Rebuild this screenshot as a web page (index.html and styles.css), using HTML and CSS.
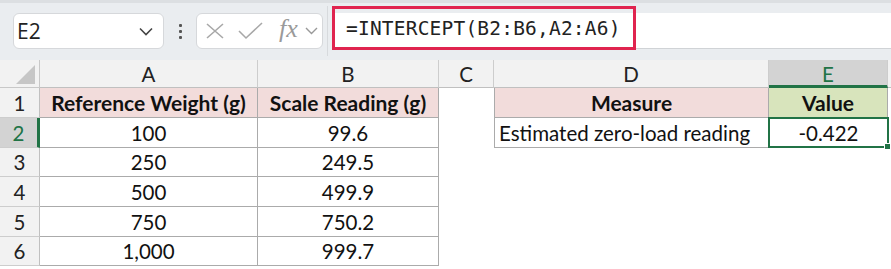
FILE: index.html
```html
<!DOCTYPE html>
<html lang="en">
<head>
  <meta charset="UTF-8" />
  <title>INTERCEPT</title>
  <link rel="stylesheet" href="styles.css">
</head>
<body>
  <div class="toolbar">
    <div class="name-box">
      <span>E2</span>
      <svg class="chev" width="14" height="9" viewBox="0 0 14 9"><path d="M1 1.5 L7 7.5 L13 1.5" fill="none" stroke="#444" stroke-width="1.6"/></svg>
    </div>
    <div class="dots"><i></i><i></i><i></i></div>
    <div class="fx-box">
      <svg width="18" height="16" viewBox="0 0 18 16"><path d="M1 1 L17 15 M17 1 L1 15" stroke="#a8a8a8" stroke-width="1.6" fill="none"/></svg>
      <svg width="25" height="18" viewBox="0 0 25 18"><path d="M1 9 L8 16 L24 1" stroke="#a8a8a8" stroke-width="1.6" fill="none"/></svg>
      <span class="fx">fx</span>
      <svg width="13" height="8" viewBox="0 0 13 8"><path d="M1 1 L6.5 6.5 L12 1" fill="none" stroke="#999" stroke-width="1.4"/></svg>
    </div>
    <div class="sep"></div>
    <div class="formula">
      <div class="formula-text">=INTERCEPT(B2:B6,A2:A6)</div>
    </div>
  </div>

  <div class="sheet">
    <div class="corner"><span></span></div>
    <div class="col-head">A</div>
    <div class="col-head">B</div>
    <div class="col-head">C</div>
    <div class="col-head">D</div>
    <div class="col-head sel">E</div>
    <div class="col-edge"></div>

    <div class="row-head">1</div>
    <div class="cell th">Reference Weight (g)</div>
    <div class="cell th">Scale Reading (g)</div>
    <div class="blank"></div>
    <div class="cell th lead">Measure</div>
    <div class="cell th green">Value</div>
    <div class="blank"></div>

    <div class="row-head sel">2</div>
    <div class="cell">100</div>
    <div class="cell">99.6</div>
    <div class="blank"></div>
    <div class="cell lead left">Estimated zero-load reading</div>
    <div class="cell active">-0.422<span class="handle"></span></div>
    <div class="blank"></div>

    <div class="row-head">3</div>
    <div class="cell">250</div>
    <div class="cell">249.5</div>
    <div class="blank wide"></div>

    <div class="row-head">4</div>
    <div class="cell">500</div>
    <div class="cell">499.9</div>
    <div class="blank wide"></div>

    <div class="row-head">5</div>
    <div class="cell">750</div>
    <div class="cell">750.2</div>
    <div class="blank wide"></div>

    <div class="row-head">6</div>
    <div class="cell">1,000</div>
    <div class="cell">999.7</div>
    <div class="blank wide"></div>
  </div>
</body>
</html>
```

FILE: styles.css
```css
* {
  box-sizing: border-box;
}

body {
  margin: 0;
  width: 891px;
  height: 269px;
  overflow: hidden;
  background: white;
  font-family: Lato, "Open Sans", sans-serif;
  color: #111;
}

/* formula bar */
.toolbar {
  height: 60px;
  background: #eaedf0;
  border-top: 3px solid #dcdfe2;
  display: flex;
  align-items: flex-start;
  padding: 10px 0 0 13px;
}

.name-box {
  width: 151px;
  height: 36px;
  background: white;
  border: 1px solid #d6d8db;
  border-radius: 6px;
  display: flex;
  align-items: center;
  justify-content: space-between;
  padding: 0 10px 0 3px;
  font-family: "Open Sans", sans-serif;
  font-size: 21px;
  color: #222;
}

.dots {
  width: 32px;
  height: 36px;
  display: flex;
  flex-direction: column;
  align-items: center;
  justify-content: center;
  gap: 3px;
}

.dots i {
  width: 3px;
  height: 3px;
  background: #555;
  border-radius: 1px;
}

.fx-box {
  width: 127px;
  height: 36px;
  background: white;
  border: 1px solid #d6d8db;
  border-radius: 6px;
  display: flex;
  align-items: center;
  gap: 14px;
  padding-left: 9px;
}

.fx {
  font-family: "Liberation Serif", serif;
  font-style: italic;
  font-size: 26px;
  line-height: 1;
  color: #9a9a9a;
  margin-left: 2px;
  margin-right: -7px;
  margin-top: -4px;
}

.sep {
  width: 1px;
  height: 50px;
  margin: -7px 4px 0 4px;
  background: #d7dadd;
}

.formula {
  flex: 1;
  height: 36px;
  background: white;
  border-bottom: 1px solid #d0d3d6;
}

.formula-text {
  width: 304px;
  height: 44px;
  margin-top: -7px;
  border: 3px solid #e0244f;
  padding: 8px 0 0 11px;
  font-family: "DejaVu Sans Mono", monospace;
  font-size: 19.5px;
  color: #222;
  letter-spacing: 0.2px;
}

/* grid */
.sheet {
  display: grid;
  grid-template-columns: 40px 218px 181px 55px 275px 119px 3px;
  grid-template-rows: 28px 30px 30px 29px 30px 30px 29px;
  font-size: 20.5px;
}

.corner {
  background: #f2f2f2;
  border-right: 1px solid #c8c8c8;
  border-bottom: 1px solid #c8c8c8;
  position: relative;
}

.corner span {
  position: absolute;
  right: 4px;
  bottom: 3px;
  width: 0;
  height: 0;
  border-left: 19px solid transparent;
  border-bottom: 19px solid #c6c6c6;
}

.col-head {
  background: #f2f2f2;
  border-right: 1px solid #cdcdcd;
  border-bottom: 1px solid #c0c0c0;
  display: flex;
  align-items: center;
  justify-content: center;
  color: #222;
}

.col-head.sel {
  background: #d3d3d3;
  color: #217346;
  border-bottom: 3px solid #217346;
  padding-top: 2px;
}

.col-edge {
  background: #f2f2f2;
  border-bottom: 1px solid #c0c0c0;
}

.row-head {
  background: #f2f2f2;
  border-right: 1px solid #c0c0c0;
  border-bottom: 1px solid #cdcdcd;
  display: flex;
  align-items: center;
  justify-content: center;
  color: #222;
}

.row-head.sel {
  background: #d3d3d3;
  color: #217346;
  border-right: 3px solid #217346;
}

.cell {
  border-right: 1px solid #ababab;
  border-bottom: 1px solid #ababab;
  display: flex;
  align-items: center;
  justify-content: center;
  white-space: nowrap;
}

.cell.th {
  background: #f2dcdb;
  font-weight: bold;
  font-size: 21px;
}

.cell.green {
  background: #d8e4bc;
}

.cell.lead {
  border-left: 1px solid #ababab;
}

.cell.left {
  justify-content: flex-start;
  padding-left: 4px;
}

.cell.active {
  border: 2px solid #217346;
  margin: -1px -1px 0 -1px;
  position: relative;
}

.handle {
  position: absolute;
  right: -4px;
  bottom: -4px;
  width: 7px;
  height: 7px;
  background: #217346;
  border: 1px solid white;
}

.blank.wide {
  grid-column: span 4;
}
```
